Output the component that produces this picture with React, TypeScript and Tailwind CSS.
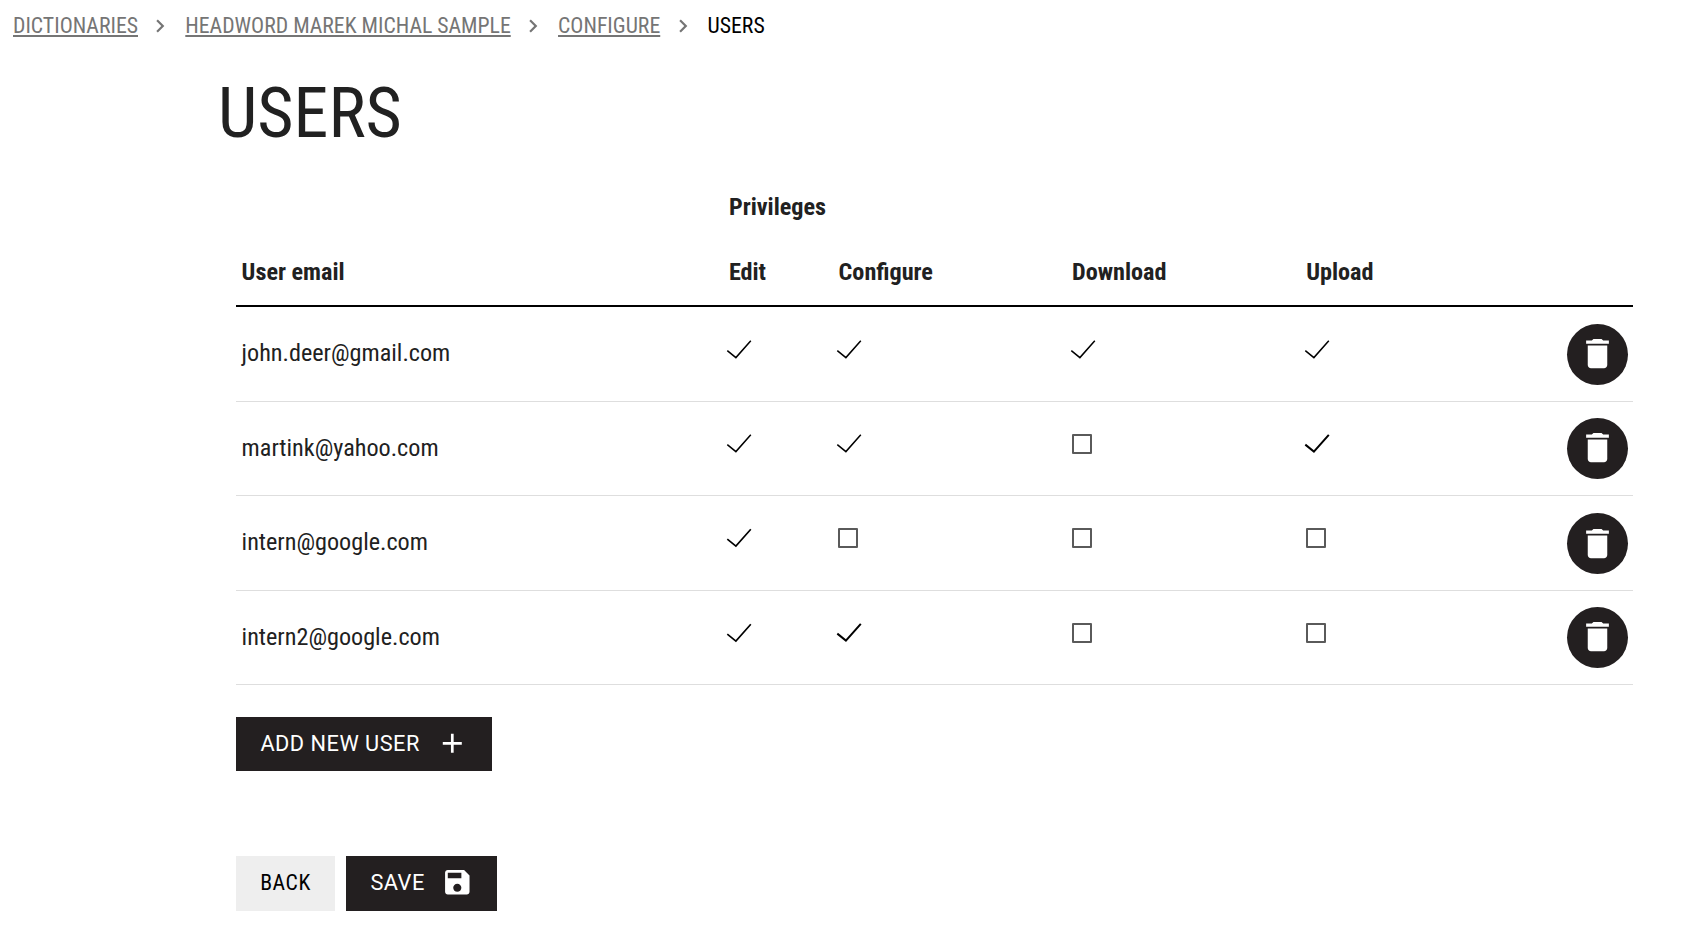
type Mark = 'thin' | 'medium' | 'bold' | 'off';

interface UserRow {
  email: string;
  privileges: Mark[];
  height: string;
  emailPad: string;
  buttonMargin: string;
}

const users: UserRow[] = [
  {
    email: 'john.deer@gmail.com',
    privileges: ['thin', 'thin', 'thin', 'thin'],
    height: 'h-[95px] pt-px',
    emailPad: 'pb-[3px]',
    buttonMargin: 'mb-px',
  },
  {
    email: 'martink@yahoo.com',
    privileges: ['thin', 'thin', 'off', 'bold'],
    height: 'h-[94px]',
    emailPad: 'pb-px',
    buttonMargin: 'mb-px',
  },
  {
    email: 'intern@google.com',
    privileges: ['medium', 'off', 'off', 'off'],
    height: 'h-[95px]',
    emailPad: 'pb-[3px]',
    buttonMargin: 'mt-px',
  },
  {
    email: 'intern2@google.com',
    privileges: ['medium', 'bold', 'off', 'off'],
    height: 'h-[94px]',
    emailPad: 'pb-px',
    buttonMargin: 'mb-px',
  },
];

const links = ['Dictionaries', 'Headword Marek Michal Sample', 'Configure'];

const columns = 'grid grid-cols-[487.3px_109.7px_233.9px_233.9px_1fr_80px]';

const strokes: Record<Exclude<Mark, 'off'>, number> = { thin: 1.5, medium: 1.7, bold: 2 };

function Icon({ d, className }: { d: string; className: string }) {
  return (
    <svg viewBox="0 0 24 24" fill="currentColor" className={className} aria-hidden="true">
      <path d={d} />
    </svg>
  );
}

const CHEVRON = 'M10 6L8.59 7.41 13.17 12l-4.58 4.59L10 18l6-6z';
const TRASH = 'M6 19c0 1.1.9 2 2 2h8c1.1 0 2-.9 2-2V7H6v12zM19 4h-3.5l-1-1h-5l-1 1H5v2h14V4z';
const PLUS = 'M19 13h-6v6h-2v-6H5v-2h6V5h2v6h6v2z';
const DISK =
  'M17 3H5c-1.11 0-2 .9-2 2v14c0 1.1.89 2 2 2h14c1.1 0 2-.9 2-2V7l-4-4zm-5 16c-1.66 0-3-1.34-3-3s1.34-3 3-3 3 1.34 3 3-1.34 3-3 3zm3-10H5V5h10v4z';

function Checkbox({ mark }: { mark: Mark }) {
  if (mark === 'off') {
    return <span className="block size-5 rounded-[1px] border-2 border-[#5a5a5a]" />;
  }
  return (
    <svg viewBox="0 0 26 20" className="-ml-0.5 block h-5 w-[26px]" aria-hidden="true">
      <path
        d={mark === 'medium' ? 'M1.3 11.1L9.9 18.1L24.8 1.3' : 'M1.3 10.6L9.9 17.6L24.8 0.8'}
        fill="none"
        stroke="#000"
        strokeWidth={strokes[mark]}
      />
    </svg>
  );
}

export default function App() {
  return (
    <div className="min-h-[928px] bg-white font-['Roboto_Condensed',Roboto,sans-serif] font-[370] text-[#212121]">
      <nav className="flex h-[51px] items-center pl-[13px] text-[21.75px] leading-none text-[#757575] uppercase">
        {links.map((label) => (
          <div key={label} className="flex items-center">
            <a className="underline decoration-2 underline-offset-2">{label}</a>
            <span className="w-[47.3px] pl-[9.3px]">
              <Icon d={CHEVRON} className="size-[26px]" />
            </span>
          </div>
        ))}
        <span className="text-black">Users</span>
      </nav>

      <h1 className="mt-[22px] pl-[218px] text-[70px] leading-[80px]">USERS</h1>

      <main className="mt-[21px] ml-[236px] w-[1397px]">
        <div className="text-[24.2px] font-bold">
          <div className={`${columns} leading-[66px]`}>
            <div className="col-start-2 pl-[5.6px]">Privileges</div>
          </div>
          <div className={`${columns} h-[67px] border-b-2 border-black leading-[64px]`}>
            <div className="pl-[5.6px]">User email</div>
            <div className="pl-[5.6px]">Edit</div>
            <div className="pl-[5.6px]">Configure</div>
            <div className="pl-[5.2px]">Download</div>
            <div className="pl-[5.4px]">Upload</div>
          </div>
        </div>

        {users.map((user) => (
          <div key={user.email} className={`${columns} border-b border-[#dedede] ${user.height}`}>
            <div className={`self-center pl-[5.6px] text-[24.2px] leading-9 ${user.emailPad}`}>{user.email}</div>
            {user.privileges.map((mark, i) => (
              <div key={i} className="pt-8 pl-[5px]">
                <Checkbox mark={mark} />
              </div>
            ))}
            <button
              className={`mr-[5px] flex size-[61px] items-center justify-center self-center justify-self-end rounded-full bg-[#231f20] text-white ${user.buttonMargin}`}
            >
              <Icon d={TRASH} className="mb-px size-[39px]" />
            </button>
          </div>
        ))}

        <button className="mt-8 flex h-[54px] w-64 items-center justify-between bg-[#231f20] pr-[23.6px] pl-[24.4px] font-['Roboto',sans-serif] text-[21.75px] tracking-[0.5px] text-white">
          ADD NEW USER
          <Icon d={PLUS} className="mb-px size-[32.6px]" />
        </button>

        <div className="mt-[85px] flex gap-[11px] text-[21.75px] tracking-[0.5px]">
          <button className="h-[55px] w-[99px] bg-[#eeeeee] text-black">BACK</button>
          <button className="flex h-[55px] w-[151px] items-center justify-between bg-[#231f20] pr-[23.6px] pl-[24.4px] font-['Roboto',sans-serif] text-white">
            SAVE
            <Icon d={DISK} className="mb-[2px] size-[32.6px]" />
          </button>
        </div>
      </main>
    </div>
  );
}
